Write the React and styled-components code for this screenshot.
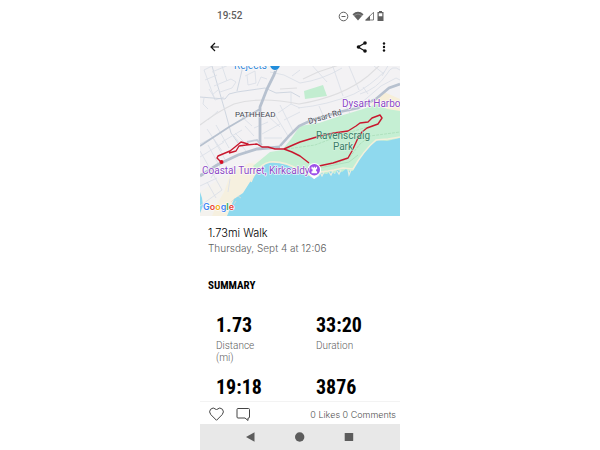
import React from "react";
import styled, { createGlobalStyle } from "styled-components";

const GlobalStyle = createGlobalStyle`
  * {
    box-sizing: border-box;
  }

  body {
    margin: 0;
    background-color: #ffffff;
    color: #111111;
    font-family: Inter, "Liberation Sans", sans-serif;
  }

  h1, h2, p, dl, dd {
    margin: 0;
  }
`;

const Page = styled.div`
  display: grid;
  grid-template-columns: 1fr minmax(200px, 1fr) 1fr;
  height: 100vh;
`;

const Phone = styled.div`
  grid-column: 2;
  display: flex;
  flex-direction: column;
  min-width: 0;
  min-height: 0;
`;

const StatusBar = styled.div`
  display: flex;
  align-items: center;
  justify-content: space-between;
  padding: 9px 15px 9px 17px;
  color: #606060;
  font: 500 10px/14px Roboto, sans-serif;
`;

const StatusIcons = styled.div`
  display: flex;
  align-items: center;
  gap: 1px;

  svg:first-child {
    margin-right: 2px;
  }
`;

const AppBar = styled.header`
  display: flex;
  align-items: center;
  padding: 8px 9px 12px;
`;

const IconButton = styled.button`
  display: flex;
  padding: 0;
  border: 0;
  background: none;
  color: ${(props) => props.$color || "#111111"};
  cursor: pointer;
`;

const Actions = styled.div`
  display: flex;
  gap: 8px;
  margin-left: auto;
`;

const MapView = styled.svg`
  display: block;
  flex: none;
  width: 100%;
  aspect-ratio: 4 / 3;
  font-family: Roboto, sans-serif;
`;

const Details = styled.main`
  flex: 1;
  min-height: 0;
  overflow: hidden;
  padding: 10px 8px 0;
`;

const Title = styled.h1`
  color: #000000;
  font-size: 11px;
  font-weight: 300;
  line-height: 15px;
`;

const DateLine = styled.p`
  color: #606060;
  font-size: 10px;
  font-weight: 300;
  line-height: 14px;
`;

const SectionTitle = styled.h2`
  margin-top: 22px;
  color: #000000;
  font: 700 11px/18px "Roboto Condensed", Roboto, sans-serif;
`;

const Stats = styled.dl`
  display: grid;
  grid-template-columns: 1fr 1fr;
  gap: 8px 32px;
  margin-top: 15px;
  padding: 0 8px;
`;

const Stat = styled.div`
  display: flex;
  flex-direction: column-reverse;
  justify-content: flex-end;
`;

const StatValue = styled.dd`
  color: #000000;
  font: 700 20px/30px "Roboto Condensed", Roboto, sans-serif;
`;

const StatLabel = styled.dt`
  width: min-content;
  color: #606060;
  font: 300 10px/12px Roboto, sans-serif;
`;

const SocialBar = styled.footer`
  display: flex;
  align-items: center;
  gap: 12px;
  padding: 5px 4px 3px 9px;
  border-top: 1px solid #f3f3f3;
`;

const SocialCount = styled.p`
  margin-left: auto;
  padding-top: 2px;
  color: #505050;
  font-size: 9px;
  font-weight: 300;
  line-height: 12px;
  white-space: nowrap;
`;

const NavBar = styled.nav`
  display: flex;
  align-items: center;
  justify-content: center;
  gap: 37px;
  padding: 7px 0;
  background-color: #e8e8e8;
`;

const stats = [
  { label: "Distance (mi)", value: "1.73" },
  { label: "Duration", value: "33:20" },
  { label: "", value: "19:18" },
  { label: "", value: "3876" },
];

const RouteMap = () => (
  <MapView viewBox="0 0 200 150" preserveAspectRatio="xMidYMid slice" role="img" aria-label="Map of the walk">
    <rect width="200" height="150" fill="#f3f2f4" />

    {/* built-up shore, beach and harbour */}
    <path d="M0 126 L20 112 L50 97 L72 87 L92 93 L100 104 L72 98 L57 108 L44 128 L30 150 H0Z" fill="#f4f2ee" />
    <path d="M12 150 L17 138 L24 126 L31 107 L49 97 L60 99 L60 106 L45 126 L33 150Z" fill="#f6f0df" />
    <path d="M174 34 L184 26 L200 33 V48 L184 44 L170 43Z" fill="#f7efd9" />

    {/* parks */}
    <path d="M53 100 L70 86 L82 84 L91 73 L100 60 L119 57 L140 50 L163 43 L177 38 L187 43 L200 45 V73 L176 78 L157 105 L122 109 L103 110 L86 99 L69 97 L57 105Z" fill="#c5efd3" />
    <path d="M104 25 L123 19 L127 30 L105 33Z" fill="#c2edd0" />

    {/* sea */}
    <path d="M27 150 L34 133 L43 127 L50 116 L57 106 L67 97 L75 96 L88 99 L98 105 L107 108 L114 113 L119 110 L121 107 L127 108 L130 105 L135 108 L137 104 L142 106 L146 103 L149 105 L153 105 L156 98 L163 88 L171 79 L178 74 L187 75 L200 72 V150Z" fill="#8fd9ee" />
    <path d="M0 126 L2 132 L3 140 L0 147Z" fill="#8fd9ee" />
    <path d="M51 116 Q58 98 70 96 Q85 95 99 104 L114 111 L120 106 L128 105 L134 104 L143 102 L153 103 Q164 84 176 74 L188 73 L200 71" fill="none" stroke="#f2efda" strokeWidth="1.6" />
    <path d="M120 106 l2 4 l2 -4 m5 0 l2 3 l2 -4 m4 0 l2 3 l2 -4 m7 0 l1 5 l2 -5" fill="none" stroke="#e7eee0" strokeWidth="1.2" />
    <path d="M31 136 L35 132 M34 138 L36 135 M38 130 L41 132" fill="none" stroke="#dcdad2" strokeWidth="0.8" />

    {/* side streets */}
    <g fill="none" stroke="#dbe0e8" strokeWidth="0.9">
      <path d="M12 0 L25 45 L31 67 L38 77" stroke="#cbd3de" />
      <path d="M12 6 L31 -2 M4 4 L12 0 M5 14 L17 9 M14 20 L31 13 L36 16 L32 22 L20 26 M12 29 L18 24 M9 23 L14 31 M22 0 L27 15 M4 4 L15 34 L24 31" />
      <path d="M0 31 L25 33 L29 28 L37 26 L65 22 L76 27 L91 26 L100 31" stroke="#cbd3de" />
      <path d="M43 0 L37 25" stroke="#cbd3de" />
      <path d="M45 10 L55 5 L56 17 L48 19 L47 9 M57 20 L61 11 L67 13 M70 6 L84 9 L100 17 M92 10 L100 4 M91 27 V38 L78 47 M80 39 L93 65 M84 54 L100 46 M91 38 L100 42" />
      <path d="M41 50 L52 60 M35 67 L45 77 M45 60 L54 70 M54 62 L68 56 M62 68 L80 58 M68 50 L80 61 M74 47 L88 70 M64 72 L82 72" />
      <path d="M4 32 L3 38 L8 43 M18 45 L8 54 M7 63 L22 85 M16 59 L29 82 M0 78 L19 68 M0 91 L24 76 M22 76 L42 64 M34 70 L46 85" />
      <path d="M0 85 L22 124 M8 79 L20 101 M13 72 L27 97 M20 96 L11 112 M12 109 L34 101 M0 108 L13 104 M0 120 L17 112 M22 124 L0 140 M7 116 L16 132 M30 113 L28 126" />
      <path d="M98 42 Q128 39 154 28 Q170 20 185 5 M100 17 Q122 14 142 2 M132 -2 L143 30 M110 -3 L127 16 M149 0 L159 24 M119 40 L125 54 M142 34 L150 47 M163 21 L168 28" />
      <path d="M160 28 Q177 23 187 8 Q192 -2 200 4 M160 38 L181 20 L196 12 L200 14 M174 0 L184 8 M189 -2 L182 10" />
    </g>
    <g fill="none" stroke="#dedee0" strokeWidth="1.1">
      <path d="M0 59 Q17 46 34 38 Q60 30 99 38 Q142 31 168 10 L180 -1" />
      <path d="M80 23 L97 22 M103 13 L118 6 L139 -1" />
    </g>

    {/* main roads */}
    <g fill="none" stroke="#b7c1cf" strokeWidth="2.4">
      <path d="M0 80 L29 61 L60 43" strokeWidth="1.8" />
      <path d="M78 -2 L74 9 L67 23 L60 41 V80" strokeWidth="2.8" />
      <path d="M0 110 L17 99 L38 89 L57 83 L80 81" strokeWidth="2.8" />
      <path d="M80 80 L90 69 L99 60 L112 54 L139 46 L158 42 L176 33 L189 22 L200 18" strokeWidth="2.6" />
      <path d="M47 76 L57 74 L62 79" stroke="#c3cbd7" strokeWidth="1.8" />
    </g>
    <g fill="none" stroke="#a9ddb9" strokeWidth="0.8">
      <path d="M87 83 L115 79 L147 67 L175 59 M135 98 L149 92 L160 78 L170 70 L200 66" strokeDasharray="3 1" />
      <path d="M105 102 L124 101 L149 96 L158 89" />
    </g>

    {/* walked route */}
    <path
      d="M21 96 L17 92 L18 90 L30 85 L35 81 L41 76 L48 78 L46 79 L39 80 L36 85 L29 87 M46 79 L57 78 L62 81 L68 81 L75 83 L84 83 L93 79 L100 76 L120 70 L134 67 L148 65 L156 60 L160 57 L168 56 L172 52 L180 49 L182 52 L178 58 L167 62 L162 66 L158 72 L152 85 L148 92 L133 97 L119 100 M109 97 L100 90 L92 86 L84 83"
      fill="none"
      stroke="#c8182e"
      strokeWidth="1.4"
      strokeLinejoin="round"
    />
    <circle cx="21.5" cy="96" r="2" fill="#d70d22" />

    {/* place pins */}
    <path d="M67 -7 H83 Q82 0 75 5 Q68 0 67 -7Z" fill="#ffffff" />
    <path d="M69 -5 H81 Q80 4 75 4 Q70 4 69 -5Z" fill="#218ddb" />
    <path d="M114.3 113 L109 108 A6.8 6.8 0 1 1 119.6 108Z" fill="#ffffff" />
    <circle cx="114.3" cy="103.8" r="5.7" fill="#9b50e8" />
    <path d="M111.5 100.8 h1.2 v1 h1 v-1 h1.2 v1 h1 v-1 h1.2 v2.5 h-1 v2 h1 v2 h-5.6 v-2 h1 v-2 h-1Z" fill="#ffffff" />

    {/* labels */}
    <g stroke="#ffffff" strokeWidth="1.2" strokeLinejoin="round" paintOrder="stroke">
      <text x="34" y="3" fontSize="10" fill="#3188d9">Rejects</text>
      <text x="35" y="51" fontSize="8" fill="#3f454e" strokeWidth="0.6">PATHHEAD</text>
      <text x="142" y="41" fontSize="10" fill="#8c48c5">Dysart Harbour</text>
      <text x="109" y="58" fontSize="8" fill="#3f4754" strokeWidth="0.6" transform="rotate(-16 109 58)">Dysart Rd</text>
      <text x="143" y="73" fontSize="10" textAnchor="middle" fill="#397d68" stroke="#d8f5e1" strokeWidth="0.6">Ravenscraig</text>
      <text x="143" y="84" fontSize="10" textAnchor="middle" fill="#397d68" stroke="#d8f5e1">Park</text>
      <text x="2" y="108" fontSize="10" fill="#8c48c5">Coastal Turret, Kirkcaldy</text>
      <text x="3" y="144" fontSize="9" fontWeight="600" fontFamily="Inter, sans-serif">
        <tspan fill="#4285f4">G</tspan>
        <tspan fill="#e84335">o</tspan>
        <tspan fill="#f0ad16">o</tspan>
        <tspan fill="#4285f4">g</tspan>
        <tspan fill="#34a853">l</tspan>
        <tspan fill="#e84335">e</tspan>
      </text>
    </g>
  </MapView>
);

const App = () => {
  return (
    <>
      <GlobalStyle />
      <Page>
        <Phone>
          <StatusBar>
            <span>19:52</span>
            <StatusIcons>
              <svg width="11" height="11" viewBox="0 0 11 11" fill="none" stroke="currentColor">
                <circle cx="5.5" cy="5.5" r="4.3" />
                <path d="M3.5 5.5 h4" />
              </svg>
              <svg width="12" height="10" viewBox="0 0 12 10" fill="currentColor">
                <path d="M0.5 3.2 Q6 -1.5 11.5 3.2 L6 9.5Z" />
                <path d="M2 4.5 Q6 1.5 10 4.5" fill="none" stroke="#bbbbbb" strokeWidth="0.5" />
              </svg>
              <svg width="9" height="10" viewBox="0 0 9 10" fill="currentColor">
                <path d="M0.8 9 L8.5 1.3 V9Z" fill="none" stroke="currentColor" strokeWidth="0.8" />
                <path d="M0 9.5 L5 4.5 V9.5Z" />
              </svg>
              <svg width="10" height="10" viewBox="0 0 10 10" fill="currentColor">
                <path d="M4 0 h3 v1 h1.5 v9 h-6 v-9 h1.5Z M3.7 2.2 v3 h3.6 v-3Z" fillRule="evenodd" />
              </svg>
            </StatusIcons>
          </StatusBar>

          <AppBar>
            <IconButton aria-label="Back">
              <svg width="12" height="12" viewBox="0 0 12 12" fill="none" stroke="currentColor" strokeWidth="1.2">
                <path d="M10 6 H2.2 M6 2 L2 6 L6 10" />
              </svg>
            </IconButton>
            <Actions>
              <IconButton aria-label="Share">
                <svg width="14" height="14" viewBox="0 0 14 14" fill="currentColor">
                  <path d="M10 3 L3 7 L10 11" fill="none" stroke="currentColor" strokeWidth="1.2" />
                  <circle cx="10" cy="3" r="1.8" />
                  <circle cx="3.5" cy="7" r="1.8" />
                  <circle cx="10" cy="11" r="1.8" />
                </svg>
              </IconButton>
              <IconButton aria-label="More options">
                <svg width="14" height="14" viewBox="0 0 14 14" fill="currentColor">
                  <circle cx="7" cy="3.5" r="1.2" />
                  <circle cx="7" cy="7" r="1.2" />
                  <circle cx="7" cy="10.5" r="1.2" />
                </svg>
              </IconButton>
            </Actions>
          </AppBar>

          <RouteMap />

          <Details>
            <Title>1.73mi Walk</Title>
            <DateLine>Thursday, Sept 4 at 12:06</DateLine>
            <SectionTitle>SUMMARY</SectionTitle>
            <Stats>
              {stats.map((stat) => (
                <Stat key={stat.value}>
                  <StatLabel>{stat.label}</StatLabel>
                  <StatValue>{stat.value}</StatValue>
                </Stat>
              ))}
            </Stats>
          </Details>

          <SocialBar>
            <IconButton $color="#444444" aria-label="Like">
              <svg width="15" height="14" viewBox="0 0 15 14" fill="none" stroke="currentColor">
                <path d="M7.5 13.3 L1.8 7.6 Q-0.5 4.8 1.5 2.3 Q4.2 -0.3 6.8 2.2 L7.5 3 L8.2 2.2 Q10.8 -0.3 13.5 2.3 Q15.5 4.8 13.2 7.6Z" />
              </svg>
            </IconButton>
            <IconButton $color="#444444" aria-label="Comment">
              <svg width="15" height="14" viewBox="0 0 15 14" fill="none" stroke="currentColor" strokeLinejoin="round">
                <path d="M2 1.5 H12.5 Q13.5 1.5 13.5 2.5 V10 Q13.5 11 12.5 11 H12 V13.5 L9 11 H2 Q1 11 1 10 V2.5 Q1 1.5 2 1.5Z" />
              </svg>
            </IconButton>
            <SocialCount>0 Likes 0 Comments</SocialCount>
          </SocialBar>

          <NavBar>
            <IconButton $color="#5c5c5c" aria-label="System back">
              <svg width="12" height="12" viewBox="0 0 12 12" fill="currentColor">
                <path d="M9.5 1.2 V10.8 L1 6Z" />
              </svg>
            </IconButton>
            <IconButton $color="#5c5c5c" aria-label="Home">
              <svg width="12" height="12" viewBox="0 0 12 12" fill="currentColor">
                <circle cx="5.7" cy="6" r="4.7" />
              </svg>
            </IconButton>
            <IconButton $color="#5c5c5c" aria-label="Recent apps">
              <svg width="12" height="12" viewBox="0 0 12 12" fill="currentColor">
                <rect x="1.7" y="2" width="8.5" height="8" rx="0.6" />
              </svg>
            </IconButton>
          </NavBar>
        </Phone>
      </Page>
    </>
  );
};

export default App;
